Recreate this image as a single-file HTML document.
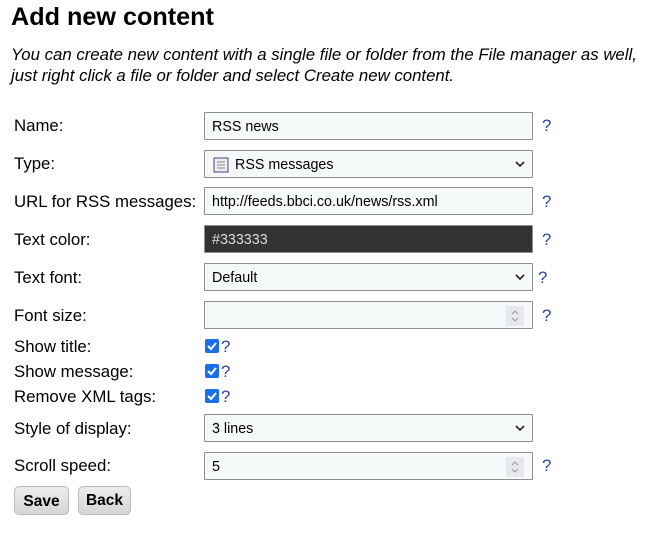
<!DOCTYPE html>
<html><head><style>
body{margin:0;width:652px;height:535px;background:#fff;font-family:"Liberation Sans",Arial,sans-serif;color:#000;position:relative;overflow:hidden}
.a{position:absolute}
h1{position:absolute;left:11px;top:3px;margin:0;font-size:25.2px;font-weight:bold}
.it{left:11px;font-style:italic;font-size:16.8px;line-height:21px;top:44px;white-space:nowrap}
.l{left:14px;font-size:16.8px}
.in{left:204px;width:327px;height:26px;border:1px solid #8f8f8f;background:#f5f9fa;font-size:14.3px;line-height:28px;box-sizing:content-box;border-radius:1px;overflow:hidden}
.in span{padding-left:7px}
.q{color:#2a3ea8;font-size:16.8px}
.chev{position:absolute;right:6px;top:8px}
.spin{position:absolute;right:8px;top:4px;width:18px;height:20px;background:#e8e8ec}
.cb{width:14px;height:14px;background:#1a6ee8;border-radius:2px;left:205px}
.btn{top:486px;height:29px;border:1px solid #bbb;border-radius:5px;background:linear-gradient(#ececec,#d6d6d6);font-weight:bold;font-size:15.5px;text-align:center;line-height:29px;box-sizing:border-box}
</style></head><body>
<h1>Add new content</h1>
<div class="a it">You can create new content with a single file or folder from the File manager as well,<br>just right click a file or folder and select Create new content.</div>

<div class="a l" style="top:116px">Name:</div>
<div class="a in" style="top:112px"><span>RSS news</span></div>
<div class="a q" style="left:542px;top:116px">?</div>

<div class="a l" style="top:154px">Type:</div>
<div class="a in" style="top:150px"><svg class="a" style="left:8px;top:6px" width="16" height="16"><rect x="1" y="1" width="14" height="14" fill="#eee" stroke="#5a3a7a"/><path d="M4 5h8M4 8h8M4 11h8" stroke="#888"/></svg><span style="padding-left:30px">RSS messages</span><svg class="chev" width="12" height="10"><path d="M2 3l4 4 4-4" stroke="#222" stroke-width="1.6" fill="none"/></svg></div>

<div class="a l" style="top:192px">URL for RSS messages:</div>
<div class="a in" style="top:187px"><span>http://feeds.bbci.co.uk/news/rss.xml</span></div>
<div class="a q" style="left:542px;top:192px">?</div>

<div class="a l" style="top:230px">Text color:</div>
<div class="a in" style="top:225px;background:#333;color:#ddd"><span>#333333</span></div>
<div class="a q" style="left:542px;top:230px">?</div>

<div class="a l" style="top:268px">Text font:</div>
<div class="a in" style="top:263px"><span>Default</span><svg class="chev" width="12" height="10"><path d="M2 3l4 4 4-4" stroke="#222" stroke-width="1.6" fill="none"/></svg></div>
<div class="a q" style="left:538px;top:268px">?</div>

<div class="a l" style="top:306px">Font size:</div>
<div class="a in" style="top:301px"><div class="spin"><svg width="18" height="20"><path d="M6 8l3-3 3 3M6 12l3 3 3-3" stroke="#999" fill="none"/></svg></div></div>
<div class="a q" style="left:542px;top:306px">?</div>

<div class="a l" style="top:337px">Show title:</div>
<div class="a cb" style="top:339px"><svg width="14" height="14"><path d="M3 7l3 3 5-6" stroke="#fff" stroke-width="2" fill="none"/></svg></div>
<div class="a q" style="left:221px;top:337px">?</div>
<div class="a l" style="top:362px">Show message:</div>
<div class="a cb" style="top:364px"><svg width="14" height="14"><path d="M3 7l3 3 5-6" stroke="#fff" stroke-width="2" fill="none"/></svg></div>
<div class="a q" style="left:221px;top:362px">?</div>
<div class="a l" style="top:387px">Remove XML tags:</div>
<div class="a cb" style="top:389px"><svg width="14" height="14"><path d="M3 7l3 3 5-6" stroke="#fff" stroke-width="2" fill="none"/></svg></div>
<div class="a q" style="left:221px;top:387px">?</div>

<div class="a l" style="top:419px">Style of display:</div>
<div class="a in" style="top:414px"><span>3 lines</span><svg class="chev" width="12" height="10"><path d="M2 3l4 4 4-4" stroke="#222" stroke-width="1.6" fill="none"/></svg></div>

<div class="a l" style="top:456px">Scroll speed:</div>
<div class="a in" style="top:452px"><span>5</span><div class="spin"><svg width="18" height="20"><path d="M6 8l3-3 3 3M6 12l3 3 3-3" stroke="#999" fill="none"/></svg></div></div>
<div class="a q" style="left:542px;top:456px">?</div>

<div class="a btn" style="left:14px;width:55px">Save</div>
<div class="a btn" style="left:78px;width:53px;line-height:27px">Back</div>
</body></html>
